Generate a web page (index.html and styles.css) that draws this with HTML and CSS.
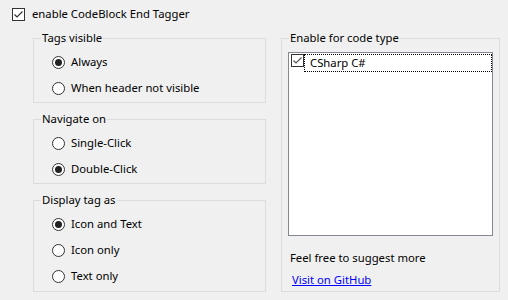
FILE: index.html
```html
<!DOCTYPE html>
<html>
<head>
<meta charset="utf-8">
<link rel="stylesheet" href="styles.css">
</head>
<body>
<div class="top">
  <span class="chk"><svg width="11" height="11" viewBox="0 0 11 11"><path d="M1.5 5.5 L4 8 L9.5 2.5" fill="none" stroke="#333" stroke-width="1.2"/></svg></span>
  <span class="lbl">enable CodeBlock End Tagger</span>
</div>
<div class="main">
  <div class="left">
    <fieldset class="grp">
      <legend>Tags visible</legend>
      <div class="rows">
        <div class="row"><span class="radio on"></span><span>Always</span></div>
        <div class="row"><span class="radio"></span><span>When header not visible</span></div>
      </div>
    </fieldset>
    <fieldset class="grp">
      <legend>Navigate on</legend>
      <div class="rows">
        <div class="row"><span class="radio"></span><span>Single-Click</span></div>
        <div class="row"><span class="radio on"></span><span>Double-Click</span></div>
      </div>
    </fieldset>
    <fieldset class="grp">
      <legend>Display tag as</legend>
      <div class="rows last">
        <div class="row"><span class="radio on"></span><span>Icon and Text</span></div>
        <div class="row"><span class="radio"></span><span>Icon only</span></div>
        <div class="row"><span class="radio"></span><span>Text only</span></div>
      </div>
    </fieldset>
  </div>
  <fieldset class="grp right">
    <legend>Enable for code type</legend>
    <div class="list">
      <div class="item">
        <span class="chk small"><svg width="11" height="11" viewBox="0 0 11 11"><path d="M1.5 5.5 L4 8 L9.5 2.5" fill="none" stroke="#555" stroke-width="1.2"/></svg></span>
        <span class="focus">CSharp C#</span>
      </div>
    </div>
    <div class="note">Feel free to suggest more</div>
    <a class="link" href="#">Visit on GitHub</a>
  </fieldset>
</div>
</body>
</html>
```
FILE: styles.css
```css
html, body {
  margin: 0;
  padding: 0;
  background: #f0f0f0;
}
body {
  width: 508px;
  height: 300px;
  overflow: hidden;
  font-family: "Noto Sans", "Open Sans", sans-serif;
  font-size: 11.3px;
  line-height: 16px;
  color: #000;
}
.top {
  display: flex;
  align-items: center;
  padding: 6px 0 0 12px;
  height: 16px;
}
.chk {
  box-sizing: border-box;
  width: 13px;
  height: 13px;
  border: 1px solid #333;
  background: #fff;
  display: flex;
  align-items: center;
  justify-content: center;
  flex: none;
}
.chk svg { display: block; }
.top .lbl { margin-left: 7px; }
.main {
  display: flex;
  gap: 15px;
  margin: 8px 0 0 33px;
}
.left {
  display: flex;
  flex-direction: column;
  gap: 8px;
  width: 233px;
}
.grp {
  margin: 0;
  padding: 0;
  border: 1px solid #dcdcdc;
  min-width: 0;
}
.grp legend {
  margin-left: 7px;
  padding: 0 1px;
  line-height: 16px;
}
.rows {
  display: flex;
  flex-direction: column;
  padding: 3px 0 1px 18px;
}
.rows.last { padding-bottom: 2px; }
.row {
  display: flex;
  align-items: center;
  height: 26px;
}
.radio {
  box-sizing: border-box;
  width: 13px;
  height: 13px;
  border: 1px solid #333;
  border-radius: 50%;
  background: #fff;
  display: flex;
  align-items: center;
  justify-content: center;
  margin-right: 6px;
  flex: none;
}
.radio.on::after {
  content: "";
  width: 7px;
  height: 7px;
  border-radius: 50%;
  background: #222;
}
.right {
  width: 219px;
  box-sizing: border-box;
  display: flex;
  flex-direction: column;
}
.list {
  box-sizing: border-box;
  margin: 6px 6px 0 6px;
  height: 184px;
  border: 1px solid #828790;
  background: #fff;
  padding: 1px 0 0 2px;
}
.item {
  display: flex;
  align-items: flex-start;
}
.focus {
  flex: 1;
  height: 18px;
  box-sizing: border-box;
  border: 1px dotted #000;
  padding-left: 5px;
  line-height: 16px;
  margin-left: 0;
}
.note {
  margin: 14px 0 0 8px;
}
.link {
  margin: 6px 0 0 10px;
  color: #0000ff;
  text-decoration: underline;
  align-self: flex-start;
}
```
